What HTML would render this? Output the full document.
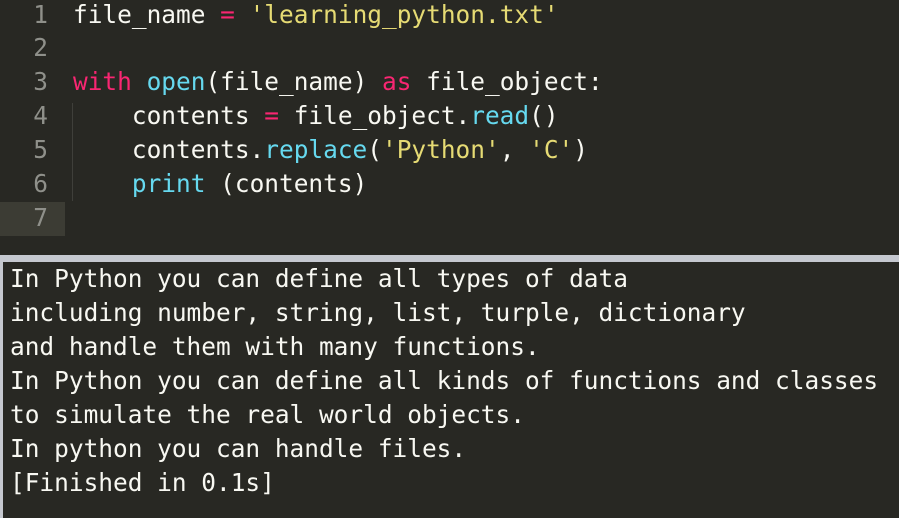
<!DOCTYPE html><html><head><style>
body{margin:0;width:899px;height:518px;background:#282823;overflow:hidden;font-family:"DejaVu Sans Mono",monospace;font-size:24.45px;color:#f8f8f2;position:relative}
.l{position:absolute;left:0;height:34px;line-height:34px;white-space:pre}
.n{position:absolute;left:0;width:48px;text-align:right;color:#8f908a}
.c{position:absolute;left:73px}
.k{color:#f92672}.b{color:#66d9ef}.s{color:#e6db74}
.o{position:absolute;left:10px;white-space:pre;line-height:34px}
</style></head><body>
<div style="position:absolute;left:0;top:202px;width:65px;height:34px;background:#3c3c34"></div>
<div style="position:absolute;left:72px;top:103px;width:1px;height:98px;background:#3f3f3a"></div>
<div class="l" style="top:-2px"><span class="n">1</span><span class="c">file_name <span class="k">=</span> <span class="s">'learning_python.txt'</span></span></div>
<div class="l" style="top:31px"><span class="n">2</span></div>
<div class="l" style="top:65px"><span class="n">3</span><span class="c"><span class="k">with</span> <span class="b">open</span>(file_name) <span class="k">as</span> file_object:</span></div>
<div class="l" style="top:99px"><span class="n">4</span><span class="c">    contents <span class="k">=</span> file_object.<span class="b">read</span>()</span></div>
<div class="l" style="top:133px"><span class="n">5</span><span class="c">    contents.<span class="b">replace</span>(<span class="s">'Python'</span>, <span class="s">'C'</span>)</span></div>
<div class="l" style="top:167px"><span class="n">6</span><span class="c">    <span class="b">print</span> (contents)</span></div>
<div class="l" style="top:201px"><span class="n">7</span></div>
<div style="position:absolute;left:0;top:255px;width:899px;height:7px;background:#c5c8cf"></div>
<div style="position:absolute;left:0;top:262px;width:3px;height:256px;background:#c5c8cf"></div>
<div class="o" style="top:262px">In Python you can define all types of data
including number, string, list, turple, dictionary
and handle them with many functions.
In Python you can define all kinds of functions and classes
to simulate the real world objects.
In python you can handle files.
[Finished in 0.1s]</div>
</body></html>
